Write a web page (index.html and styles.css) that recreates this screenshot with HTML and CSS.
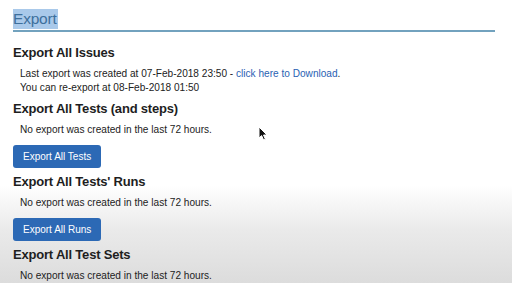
FILE: index.html
```html
<!DOCTYPE html>
<html lang="en">
<head>
  <meta charset="UTF-8">
  <title>Export</title>
  <link rel="stylesheet" href="styles.css">
</head>
<body>
  <div class="page">
    <!-- Page title -->
    <h1 class="title"><span class="selected">Export</span></h1>

    <section class="block">
      <h2>Export All Issues</h2>
      <p>Last export was created at 07-Feb-2018 23:50 - <a href="#">click here to Download</a>.</p>
      <p>You can re-export at 08-Feb-2018 01:50</p>
    </section>

    <section class="block">
      <h2>Export All Tests (and steps)</h2>
      <p>No export was created in the last 72 hours.</p>
      <button class="export-btn">Export All Tests</button>
    </section>

    <section class="block">
      <h2>Export All Tests' Runs</h2>
      <p>No export was created in the last 72 hours.</p>
      <button class="export-btn">Export All Runs</button>
    </section>

    <section class="block">
      <h2>Export All Test Sets</h2>
      <p>No export was created in the last 72 hours.</p>
    </section>
  </div>

  <!-- mouse pointer -->
  <svg class="cursor" width="12" height="16" viewBox="0 0 12 16">
    <path d="M1 1 L1 12 L3.6 9.6 L5.6 14 L7.4 13.2 L5.5 9 L9 9 Z" fill="#111" stroke="#fff" stroke-width="1"/>
  </svg>
</body>
</html>
```
FILE: styles.css
```css
* {
  margin: 0;
  padding: 0;
  box-sizing: border-box;
}

body {
  font-family: "Liberation Sans", Arial, sans-serif;
  color: #222;
  width: 512px;
  height: 283px;
  overflow: hidden;
  background: linear-gradient(to bottom, #fff 0px, #fff 185px, #eaeaea 230px, #dcdcdc 283px);
}

.page {
  padding: 9px 17px 0 13px;
}

/* Title with underline */
.title {
  font-size: 15.5px;
  font-weight: normal;
  color: #3d6f9c;
  line-height: 20px;
  padding-bottom: 1px;
  border-bottom: 2px solid #72a2be;
  letter-spacing: -0.2px;
}

.title .selected {
  background-color: #a9c9ea;
  padding: 1px 1px 2px 0;
}

.block h2 {
  font-size: 13px;
  font-weight: bold;
  color: #1e1e1e;
  line-height: 18px;
  margin-top: 5px;
  letter-spacing: -0.2px;
}

.block:first-of-type h2 {
  margin-top: 12px;
}

.block p {
  font-size: 10.1px;
  line-height: 14px;
  padding-left: 7px;
  margin-top: 5px;
  color: #222;
}

.block p + p {
  margin-top: 0;
}

a {
  color: #2a62b3;
  text-decoration: none;
}

.export-btn {
  display: block;
  margin: 8px 0 2px;
  background-color: #2c69b5;
  color: #fff;
  border: none;
  border-radius: 3px;
  font-family: "Liberation Sans", Arial, sans-serif;
  font-size: 10px;
  height: 23px;
  padding: 0 10px;
}

.cursor {
  position: absolute;
  left: 258px;
  top: 126px;
}
```
